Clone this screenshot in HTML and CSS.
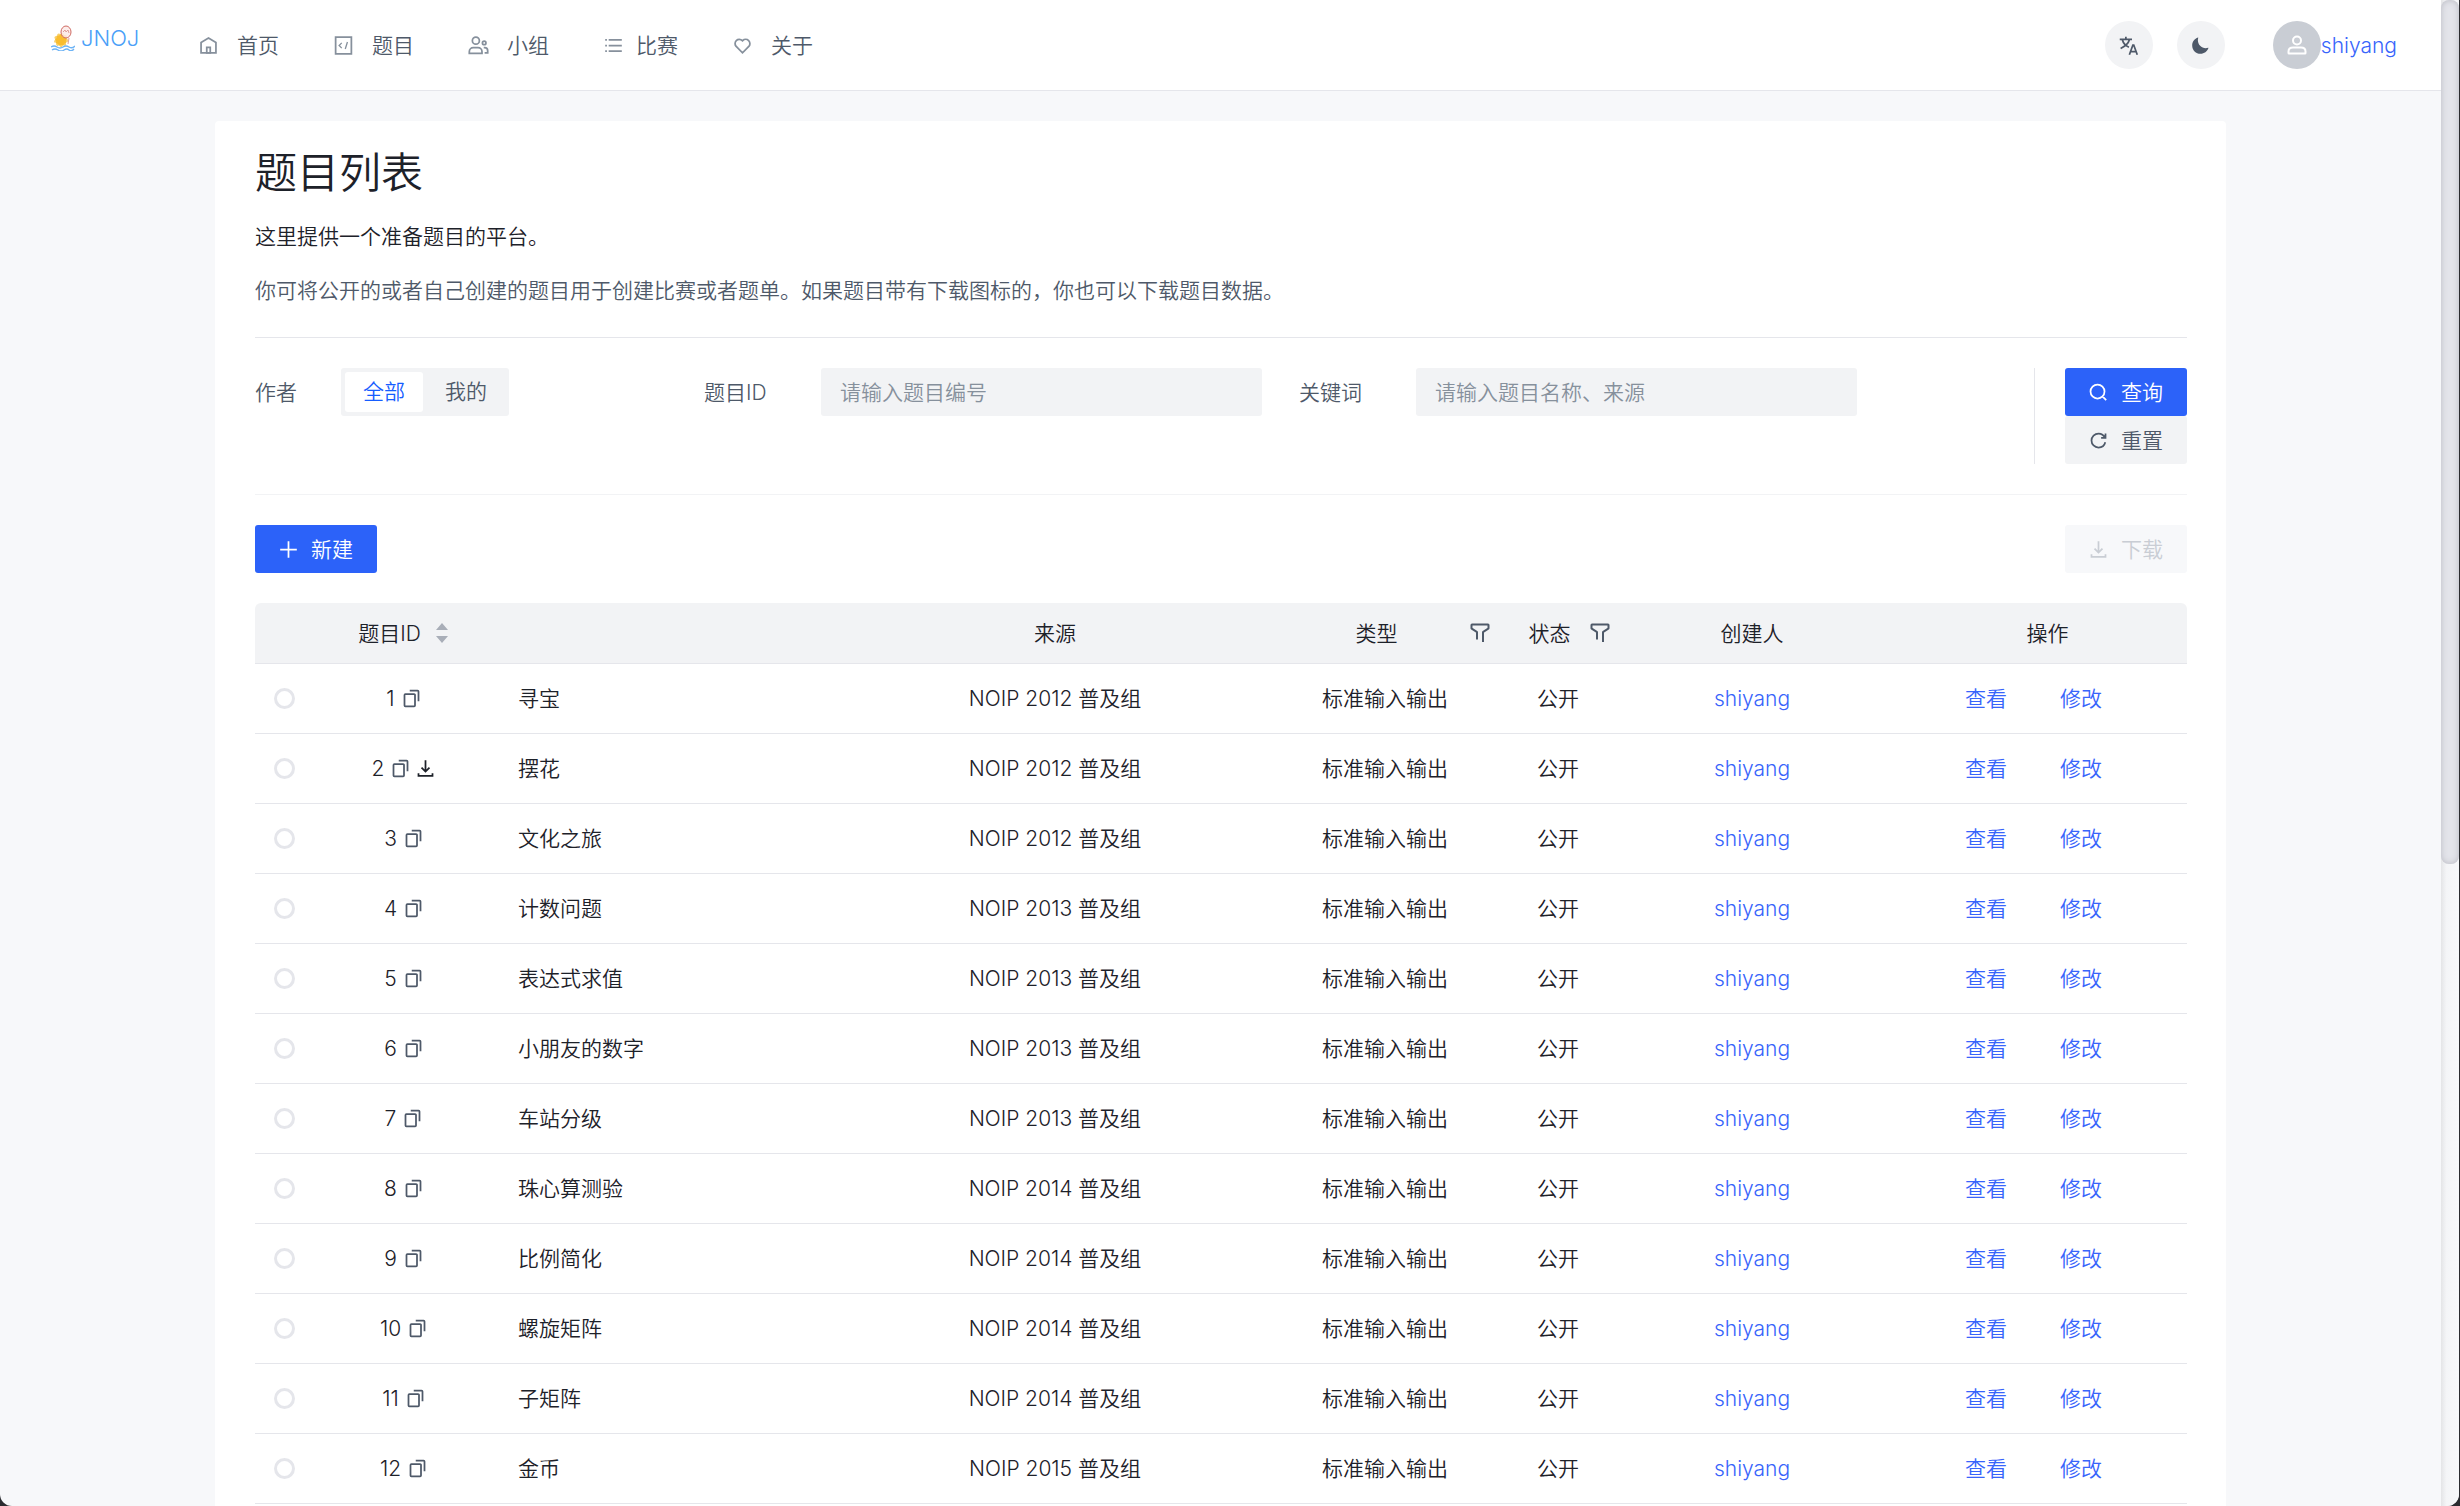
FILE: index.html
```html
<!DOCTYPE html>
<html lang="zh-CN">
<head>
<meta charset="utf-8">
<title>题目列表 - JNOJ</title>
<link rel="stylesheet" href="styles.css">
</head>
<body>
<svg class="sprite" aria-hidden="true">
  <symbol id="i-home" viewBox="0 0 48 48"><path d="M7 17 24 7l17 10v24H7V17Z"/><path d="M20 28h8v13h-8V28Z"/></symbol>
  <symbol id="i-code" viewBox="0 0 48 48"><path d="M6 5h36v38H6z"/><path d="m20 18-6 6 6 6M33 16l-5 16" stroke-width="3"/></symbol>
  <symbol id="i-group" viewBox="0 0 48 48"><circle cx="18" cy="13" r="8"/><circle cx="37" cy="18" r="4"/><path d="M3 38a9 9 0 0 1 9-9h11a9 9 0 0 1 9 9v4H3v-4ZM36 29h2a7 7 0 0 1 7 7v5h-7"/></symbol>
  <symbol id="i-list" viewBox="0 0 48 48"><path d="M13 24h30M5 11h4m4 0h30M5 24h4M5 37h4m4 0h30"/></symbol>
  <symbol id="i-heart" viewBox="0 0 48 48"><path d="M38.083 12.912a9.659 9.659 0 0 1 0 13.66l-.187.187L24 40.655 10.104 26.76l-.187-.187a9.66 9.66 0 1 1 13.66-13.66l.423.422.423-.423a9.66 9.66 0 0 1 13.66 0Z"/></symbol>
  <symbol id="i-lang" viewBox="0 0 48 48"><path d="M4 10h28M18 4v6M10 11c2 8 8 14 15 17M26 11C24 19 16 26 6 31M26 45l8-22h2l8 22M29 38h12"/></symbol>
  <symbol id="i-moon" viewBox="0 0 48 48"><path fill="currentColor" stroke="none" d="M42.108 29.769c.124-.387-.258-.736-.645-.613A17.99 17.99 0 0 1 36 30c-9.941 0-18-8.059-18-18 0-1.904.296-3.74.844-5.463.123-.387-.226-.768-.613-.645C10.558 8.334 5 15.518 5 24c0 10.493 8.507 19 19 19 8.482 0 15.666-5.558 18.108-13.231Z"/></symbol>
  <symbol id="i-user" viewBox="0 0 48 48"><path d="M7 37c0-4.97 4.03-8 9-8h16c4.97 0 9 3.03 9 8v3a1 1 0 0 1-1 1H8a1 1 0 0 1-1-1v-3Z"/><circle cx="24" cy="15" r="8"/></symbol>
  <symbol id="i-search" viewBox="0 0 48 48"><path d="M33.072 33.071c6.248-6.248 6.248-16.379 0-22.627-6.249-6.249-16.38-6.249-22.628 0-6.248 6.248-6.248 16.379 0 22.627 6.248 6.248 16.38 6.248 22.628 0Zm0 0 8.485 8.485"/></symbol>
  <symbol id="i-refresh" viewBox="0 0 48 48"><path d="M38.837 18C36.463 12.136 30.715 8 24 8 15.163 8 8 15.163 8 24s7.163 16 16 16c7.455 0 13.72-5.1 15.496-12M40 8v10H30"/></symbol>
  <symbol id="i-plus" viewBox="0 0 48 48"><path d="M5 24h38M24 5v38"/></symbol>
  <symbol id="i-download" viewBox="0 0 48 48"><path d="m33.072 22.071-9.07 9.071-9.072-9.07M24 5v26m16 4v6H8v-6"/></symbol>
  <symbol id="i-copy" viewBox="0 0 48 48"><path d="M20 6h18a2 2 0 0 1 2 2v22M8 16v24c0 1.105.891 2 1.996 2h20.007A1.995 1.995 0 0 0 32 40.008V15.997A1.997 1.997 0 0 0 30 14H10a2 2 0 0 0-2 2Z"/></symbol>
  <symbol id="i-filter" viewBox="0 0 48 48"><path d="M30 42V22.549a1 1 0 0 1 .463-.844l10.074-6.41A1 1 0 0 0 41 14.45V8a1 1 0 0 0-1-1H8a1 1 0 0 0-1 1v6.451a1 1 0 0 0 .463.844l10.074 6.41a1 1 0 0 1 .463.844V37"/></symbol>
</svg>

<div class="app">
  <header class="navbar">
    <a class="logo" href="#" aria-label="JNOJ">
      <svg class="logo-mark" viewBox="0 0 24 26" aria-hidden="true">
        <circle cx="10" cy="15" r="6" fill="#f9bd2f"/>
        <circle cx="10" cy="15" r="6" fill="none" stroke="#f7cf6b" stroke-width="2" stroke-dasharray="2 2"/>
        <ellipse cx="15" cy="7" rx="5" ry="6" fill="#fbe9e6" fill-opacity=".8" stroke="#cf6a62"/>
        <path d="M12 7l2-2 1 2 2-2 1 3M18 13l-1 6" fill="none" stroke="#e0a09b"/>
        <path d="M0 22q3-2 6 0t6 0 6 0 6-1M1 25q3-2 6 0t6 0 5 0 5-1" fill="none" stroke="#6db3f5" stroke-width="1.4"/>
      </svg>
      <span>JNOJ</span>
    </a>
    <nav class="menu">
      <a href="#"><svg class="icon"><use href="#i-home"/></svg>首页</a>
      <a href="#"><svg class="icon"><use href="#i-code"/></svg>题目</a>
      <a href="#"><svg class="icon"><use href="#i-group"/></svg>小组</a>
      <a class="tight" href="#"><svg class="icon"><use href="#i-list"/></svg>比赛</a>
      <a href="#"><svg class="icon"><use href="#i-heart"/></svg>关于</a>
    </nav>
    <div class="tools">
      <button class="round" type="button" aria-label="语言"><svg class="icon"><use href="#i-lang"/></svg></button>
      <button class="round" type="button" aria-label="主题"><svg class="icon"><use href="#i-moon"/></svg></button>
      <a class="account" href="#"><span class="avatar"><svg class="icon"><use href="#i-user"/></svg></span>shiyang</a>
    </div>
  </header>

  <main>
    <section class="card">
      <h1>题目列表</h1>
      <p class="lead">这里提供一个准备题目的平台。</p>
      <p class="note">你可将公开的或者自己创建的题目用于创建比赛或者题单。如果题目带有下载图标的，你也可以下载题目数据。</p>

      <form class="search">
        <div class="fields">
          <div class="field author">
            <span class="label" id="author-label">作者</span>
            <div class="segmented" role="radiogroup" aria-labelledby="author-label">
              <label><input type="radio" name="author" checked>全部</label>
              <label><input type="radio" name="author">我的</label>
            </div>
          </div>
          <div class="field">
            <label class="label" for="pid">题目ID</label>
            <input class="text" id="pid" type="text" placeholder="请输入题目编号">
          </div>
          <div class="field">
            <label class="label" for="keyword">关键词</label>
            <input class="text" id="keyword" type="text" placeholder="请输入题目名称、来源">
          </div>
        </div>
        <div class="actions">
          <button class="btn primary" type="button"><svg class="icon"><use href="#i-search"/></svg>查询</button>
          <button class="btn" type="button"><svg class="icon"><use href="#i-refresh"/></svg>重置</button>
        </div>
      </form>

      <div class="toolbar">
        <button class="btn primary" type="button"><svg class="icon"><use href="#i-plus"/></svg>新建</button>
        <button class="btn" type="button" disabled><svg class="icon"><use href="#i-download"/></svg>下载</button>
      </div>

      <table>
        <colgroup><col class="c-radio"><col class="c-id"><col class="c-name"><col class="c-source"><col class="c-type"><col class="c-status"><col class="c-user"><col class="c-op"></colgroup>
        <thead>
          <tr>
            <th></th>
            <th><span class="sortable">题目ID<svg class="sorter" viewBox="0 0 12 20"><path d="M6 0l6 7H0zM6 20l6-7H0z"/></svg></span></th>
            <th></th>
            <th>来源</th>
            <th class="filterable">类型<svg class="icon"><use href="#i-filter"/></svg></th>
            <th class="filterable">状态<svg class="icon"><use href="#i-filter"/></svg></th>
            <th>创建人</th>
            <th class="op-head">操作</th>
          </tr>
        </thead>
        <tbody id="rows"></tbody>
      </table>
    </section>
  </main>
  <div class="scrollbar" aria-hidden="true"><div class="thumb"></div></div>
</div>
<script src="rows.js"></script>
</body>
</html>
```
FILE: rows.js
```js
const problems = [
  ["寻宝", 2012], ["摆花", 2012, true], ["文化之旅", 2012], ["计数问题", 2013],
  ["表达式求值", 2013], ["小朋友的数字", 2013], ["车站分级", 2013], ["珠心算测验", 2014],
  ["比例简化", 2014], ["螺旋矩阵", 2014], ["子矩阵", 2014], ["金币", 2015]
];
const icon = name => `<svg class="icon"><use href="#i-${name}"/></svg>`;
document.getElementById("rows").innerHTML = problems.map(([name, year, download], i) => `
  <tr>
    <td><input class="pick" type="radio" name="problem" aria-label="${name}"></td>
    <td><span class="pid"><span class="num">${i + 1}</span>${icon("copy")}${download ? icon("download") : ""}</span></td>
    <td class="name">${name}</td>
    <td>NOIP ${year} 普及组</td>
    <td>标准输入输出</td>
    <td>公开</td>
    <td><a href="#">shiyang</a></td>
    <td><span class="ops"><a href="#">查看</a><a href="#">修改</a></span></td>
  </tr>`).join("");
```
FILE: styles.css
```css
* { box-sizing: border-box; }

body {
  margin: 0;
  padding-right: 1px;
  background: #2b2c30;
  color: #1d2129;
  font: 350 21px/33px Inter, "Noto Sans CJK SC", sans-serif;
}

a { color: #3864fb; text-decoration: none; }
button, input { font: inherit; }
.sprite { position: absolute; width: 0; height: 0; }

.icon {
  flex: none;
  width: 21px;
  height: 21px;
  fill: none;
  stroke: currentColor;
  stroke-width: 4;
}

.app {
  position: relative;
  display: flex;
  flex-direction: column;
  min-height: 100vh;
  padding-right: 18px;
  overflow: hidden;
  background: #f7f8fa;
  border-radius: 0 0 12px 12px;
}

/* top bar */
.navbar {
  display: flex;
  align-items: center;
  height: 91px;
  padding: 0 44px 0 51px;
  background: #fff;
  border-bottom: 1px solid #e5e6eb;
}
.logo {
  display: flex;
  align-items: center;
  gap: 6px;
  width: 147px;
  padding-bottom: 14px;
  color: #4a9ff8;
  font-size: 22px;
}
.logo-mark { width: 24px; height: 26px; }
.menu { display: flex; gap: 54px; }
.menu a {
  display: flex;
  align-items: center;
  gap: 18px;
  color: #4e5969;
}
.menu .tight { gap: 12px; }
.menu .icon { color: #86909c; }
.tools { display: flex; align-items: center; gap: 24px; margin-left: auto; }
.round {
  display: grid;
  place-items: center;
  width: 48px;
  height: 48px;
  padding: 0;
  border: 0;
  border-radius: 50%;
  background: #f2f3f5;
  color: #4e5969;
}
.account { display: flex; align-items: center; margin-left: 24px; }
.avatar {
  display: grid;
  place-items: center;
  width: 48px;
  height: 48px;
  border-radius: 50%;
  background: #c9cdd4;
  color: #fff;
}
.avatar .icon { width: 24px; height: 24px; }

/* page */
main { display: flex; flex: 1; padding: 30px 215px 0; }
.card {
  flex: 1;
  padding: 22px 39px 0 40px;
  background: #fff;
  border-radius: 4px 4px 0 0;
}
h1 { margin: 0 0 17px; font-size: 42px; font-weight: 350; line-height: 60px; }
p { margin: 0; }
.lead { margin-bottom: 21px; }
.note { color: #4e5969; }

.search {
  display: flex;
  margin-top: 30px;
  padding: 30px 0;
  border-top: 1px solid #e5e6eb;
  border-bottom: 1px solid #f2f3f5;
}
.fields {
  display: grid;
  flex: 1;
  grid-template-columns: 449fr 595fr 595fr;
  align-items: start;
  padding-right: 140px;
}
.field { display: flex; align-items: center; height: 48px; padding-right: 37px; }
.label { flex: none; width: 117px; color: #4e5969; }
.author .label { width: 86px; }
.text {
  flex: 1;
  min-width: 0;
  height: 48px;
  padding: 0 19px;
  border: 0;
  border-radius: 3px;
  background: #f2f3f5;
}
.text::placeholder { color: #86909c; }
.segmented {
  display: flex;
  gap: 4px;
  padding: 4px;
  border-radius: 3px;
  background: #f2f3f5;
}
.segmented label {
  height: 40px;
  padding: 0 18px;
  border-radius: 3px;
  color: #4e5969;
  line-height: 40px;
}
.segmented label:has(:checked) { background: #fff; color: #165dff; }
.segmented input { position: absolute; opacity: 0; pointer-events: none; }

.actions {
  display: flex;
  flex-direction: column;
  padding-left: 30px;
  border-left: 1px solid #e5e6eb;
}
.btn {
  display: flex;
  align-items: center;
  gap: 12px;
  height: 48px;
  padding: 0 24px 0 23px;
  border: 0;
  border-radius: 3px;
  background: #f2f3f5;
  color: #4e5969;
}
.btn.primary { background: #2c62f9; color: #fff; }
.btn:disabled { background: #f7f8fa; color: #c9cdd4; }
.toolbar { display: flex; justify-content: space-between; margin: 30px 0; }

/* problem table */
table { width: 100%; table-layout: fixed; border-spacing: 0; }
.c-radio { width: 59px; }
.c-id { width: 180px; }
.c-name { width: 344px; }
.c-type { width: 226px; }
.c-status { width: 120px; }
.c-user { width: 268px; }
.c-op { width: 301px; }
th, td { padding: 0; border-bottom: 1px solid #e5e6eb; text-align: center; }
th { height: 61px; background: #f2f3f5; font-weight: 350; }
th:first-child { border-top-left-radius: 6px; }
th:last-child { border-top-right-radius: 6px; }
td { height: 70px; }
.sortable { display: flex; align-items: center; justify-content: center; gap: 15px; padding-right: 2px; }
.sorter { width: 12px; height: 20px; fill: #a9aeb8; }
.filterable { position: relative; padding-right: 17px; }
.filterable .icon { position: absolute; top: 18px; right: 6px; width: 24px; height: 24px; color: #4e5969; }
.op-head { padding-left: 22px; }
.name { padding-left: 24px; text-align: left; }
.pick {
  display: block;
  width: 21px;
  height: 21px;
  margin: 0 auto;
  border: 3px solid #e5e6eb;
  border-radius: 50%;
  background: #fff;
  appearance: none;
}
.pick:checked { border: 6px solid #165dff; }
.pid { display: flex; align-items: center; justify-content: center; gap: 4px; }
.num { padding-right: 2px; }
.pid .icon { color: #4e5969; }
.pid .icon + .icon { color: #1d2129; }
.ops { display: flex; justify-content: center; gap: 53px; padding-right: 6px; }

/* scroll track */
.scrollbar {
  position: absolute;
  inset: 0 0 0 auto;
  width: 18px;
  background: linear-gradient(90deg, #e4e5e7, #f4f5f7 30%, #f7f8fa);
}
.thumb {
  height: 57.4%;
  border-radius: 8px;
  background: #e3e4ea;
  box-shadow: inset 0 0 6px #b9bac2;
}
```
